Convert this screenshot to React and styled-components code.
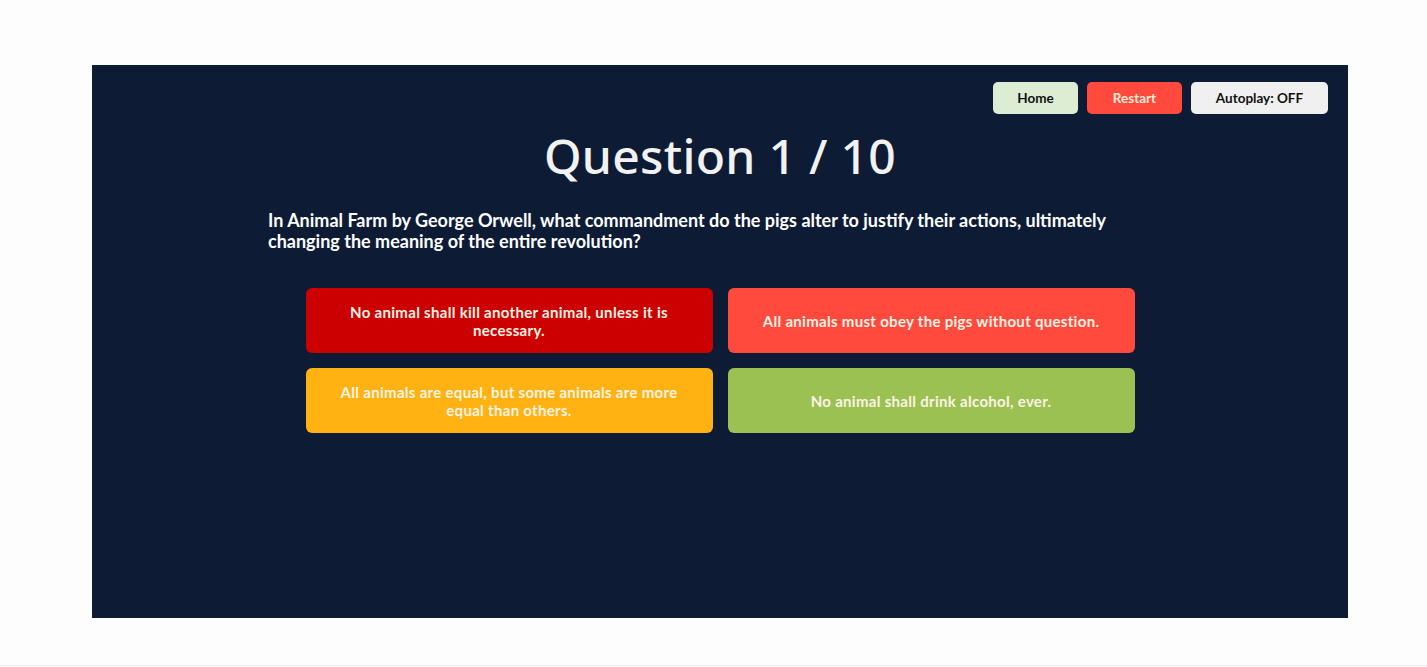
import React from "react";
import styled, { createGlobalStyle } from "styled-components";

const Global = createGlobalStyle`
  html, body {
    margin: 0;
    padding: 0;
    background: #fdfdfd;
    font-family: "Lato", "Liberation Sans", sans-serif;
  }
`;

const answers = [
  { text: "No animal shall kill another animal, unless it is necessary.", color: "#cc0000" },
  { text: "All animals must obey the pigs without question.", color: "#ff4a3d" },
  { text: "All animals are equal, but some animals are more equal than others.", color: "#ffb212" },
  { text: "No animal shall drink alcohol, ever.", color: "#9bc152" },
];

function App() {
  return (
    <>
      <Global />
      <Page>
        <Board>
          <Toolbar>
            <NavButton bg="#dcedd3" fg="#111" w={85}>Home</NavButton>
            <NavButton bg="#ff4a3d" fg="#f6ecd6" w={95}>Restart</NavButton>
            <NavButton bg="#f0f0f0" fg="#111" w={137}>Autoplay: OFF</NavButton>
          </Toolbar>
          <Title>Question 1 / 10</Title>
          <Prompt>
            In Animal Farm by George Orwell, what commandment do the pigs alter to justify their actions, ultimately
            changing the meaning of the entire revolution?
          </Prompt>
          <Answers>
            {answers.map((a) => (
              <Answer key={a.text} bg={a.color}>{a.text}</Answer>
            ))}
          </Answers>
        </Board>
      </Page>
      <Rule />
    </>
  );
}
export default App;

const Page = styled.div`
  padding: 65px 79px 0 92px;
  height: 600px;
  box-sizing: border-box;
`;

const Board = styled.div`
  width: 1256px;
  height: 553px;
  background: #0d1b35;
  box-sizing: border-box;
  padding: 17px 20px 0;
  display: flex;
  flex-direction: column;
  align-items: center;
`;

const Toolbar = styled.div`
  align-self: stretch;
  display: flex;
  justify-content: flex-end;
  gap: 9px;
`;

const NavButton = styled.button`
  width: ${(p) => p.w}px;
  height: 32px;
  border: none;
  border-radius: 5px;
  background: ${(p) => p.bg};
  color: ${(p) => p.fg};
  font-family: "Lato", "Liberation Sans", sans-serif;
  font-weight: 700;
  font-size: 13.5px;
  cursor: pointer;
`;

const Title = styled.h1`
  margin: 14px 0 0;
  color: #f2f2f2;
  font-family: "Noto Sans", "DejaVu Sans", sans-serif;
  font-weight: 500;
  font-size: 48px;
  line-height: 56px;
  letter-spacing: 0.3px;
`;

const Prompt = styled.p`
  width: 904px;
  margin: 26px 0 0;
  color: #ffffff;
  font-size: 18px;
  font-weight: 700;
  line-height: 21px;
`;

const Answers = styled.div`
  margin-top: 36px;
  display: grid;
  grid-template-columns: 407px 407px;
  gap: 15px;
`;

const Answer = styled.div`
  height: 65px;
  border-radius: 6px;
  background: ${(p) => p.bg};
  color: #fbf3e4;
  display: flex;
  align-items: center;
  justify-content: center;
  text-align: center;
  padding: 0 30px;
  box-sizing: border-box;
  font-size: 15px;
  font-weight: 700;
  letter-spacing: 0.3px;
  line-height: 18px;
`;

const Rule = styled.div`
  margin-top: 65px;
  height: 1px;
  background: #f6efe9;
`;
